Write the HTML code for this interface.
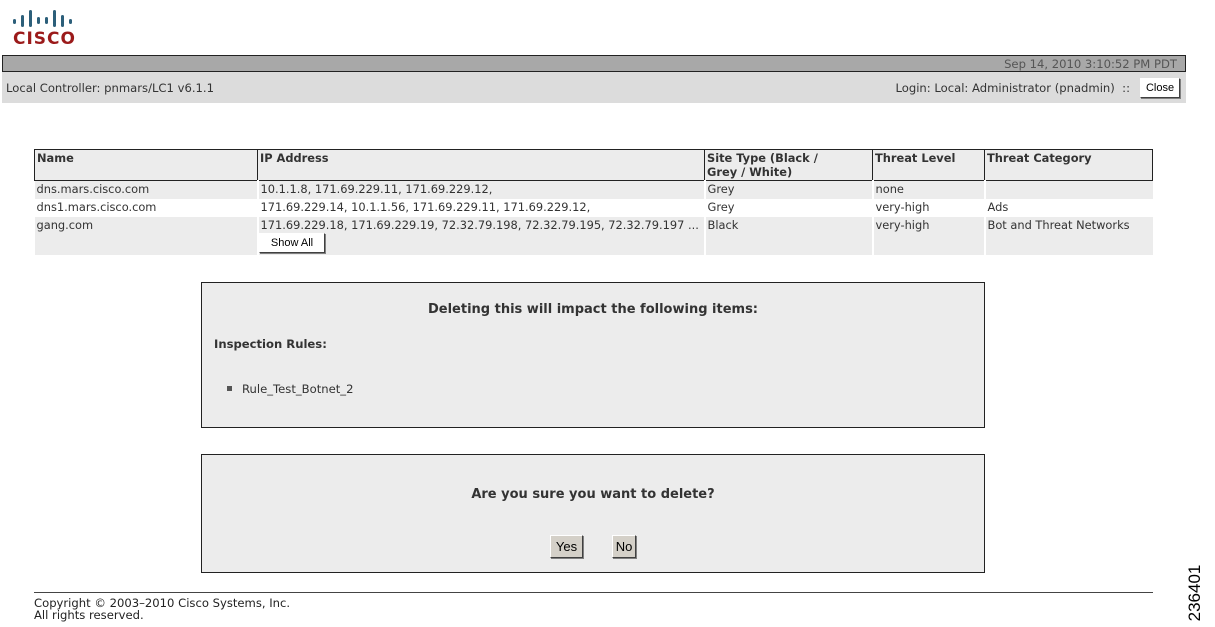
<!DOCTYPE html>
<html><head><style>
*{margin:0;padding:0;box-sizing:border-box}
body{width:1215px;height:627px;background:#fff;position:relative;font-family:"DejaVu Sans","Liberation Sans",sans-serif;font-size:11.6px;color:#333;overflow:hidden}
.a{position:absolute}
.btn{position:absolute;background:#d4d0c8;border:1px solid;border-color:#fff #404040 #404040 #fff;font-family:"Liberation Sans",sans-serif;font-size:12px;color:#000;text-align:center;box-shadow:1px 1px 0 #808080}
table{position:absolute;left:34px;top:149px;width:1119px;border-collapse:collapse;font-size:11.4px}
td,th{text-align:left;vertical-align:top;padding:1px 2px;font-weight:normal}
th{font-weight:bold;border:1px solid #222;background:#ececec;height:31px}
.g td{background:#ececec}
td+td{border-left:2px solid #fff}
</style></head><body>
<div class="a" style="left:13px;top:8px">
<svg width="66" height="22" viewBox="0 0 66 22">
<g fill="#2c5f7a">
<rect x="0" y="11" width="3" height="5" rx="1.5"/><rect x="8" y="7" width="3" height="12" rx="1.5"/><rect x="16" y="2" width="3" height="17" rx="1.5"/><rect x="24" y="9" width="3" height="7" rx="1.5"/><rect x="32" y="9" width="3" height="7" rx="1.5"/><rect x="40" y="2" width="3" height="17" rx="1.5"/><rect x="48" y="7" width="3" height="12" rx="1.5"/><rect x="56" y="11" width="3" height="5" rx="1.5"/>
</g></svg>
</div>
<div class="a" style="left:13px;top:29px;font-family:'DejaVu Sans',sans-serif;font-weight:bold;font-size:17px;color:#9b1a1a;letter-spacing:1px">CISCO</div>
<div class="a" style="left:2px;top:55px;width:1184px;height:17px;background:#a8a8a8;border:1px solid #222"></div>
<div class="a" style="right:38px;top:57px;color:#555">Sep 14, 2010 3:10:52 PM PDT</div>
<div class="a" style="left:2px;top:72px;width:1184px;height:31px;background:#dcdcdc"></div>
<div class="a" style="left:6px;top:81px">Local Controller: pnmars/LC1 v6.1.1</div>
<div class="a" style="right:85px;top:81px">Login: Local: Administrator (pnadmin) &nbsp;::</div>
<div class="btn" style="left:1140px;top:78px;width:40px;height:20px;line-height:18px;background:#fff;font-size:11px">Close</div>
<table>
<tr><th style="width:223px">Name</th><th style="width:447px">IP Address</th><th style="width:168px">Site Type (Black /<br>Grey / White)</th><th style="width:112px">Threat Level</th><th>Threat Category</th></tr>
<tr class="g" style="height:18px"><td>dns.mars.cisco.com</td><td>10.1.1.8, 171.69.229.11, 171.69.229.12,</td><td>Grey</td><td>none</td><td></td></tr>
<tr style="height:18px"><td>dns1.mars.cisco.com</td><td>171.69.229.14, 10.1.1.56, 171.69.229.11, 171.69.229.12,</td><td>Grey</td><td>very-high</td><td>Ads</td></tr>
<tr class="g" style="height:38px"><td>gang.com</td><td style="white-space:nowrap">171.69.229.18, 171.69.229.19, 72.32.79.198, 72.32.79.195, 72.32.79.197 ...</td><td>Black</td><td>very-high</td><td>Bot and Threat Networks</td></tr>
</table>
<div class="btn" style="left:259px;top:233px;width:66px;height:20px;line-height:18px;background:#fff;font-size:11px">Show All</div>
<div class="a" style="left:201px;top:282px;width:784px;height:146px;background:#ececec;border:1px solid #222"></div>
<div class="a" style="left:201px;top:302px;width:784px;text-align:center;font-weight:bold;font-size:13px">Deleting this will impact the following items:</div>
<div class="a" style="left:214px;top:337px;font-weight:bold">Inspection Rules:</div>
<div class="a" style="left:227px;top:386px;width:5px;height:5px;background:#555"></div>
<div class="a" style="left:242px;top:382px">Rule_Test_Botnet_2</div>
<div class="a" style="left:201px;top:454px;width:784px;height:119px;background:#ececec;border:1px solid #222"></div>
<div class="a" style="left:201px;top:487px;width:784px;text-align:center;font-weight:bold;font-size:13px">Are you sure you want to delete?</div>
<div class="btn" style="left:550px;top:535px;width:33px;height:23px;line-height:21px;font-size:13px">Yes</div>
<div class="btn" style="left:612px;top:535px;width:24px;height:23px;line-height:21px;font-size:13px">No</div>
<div class="a" style="left:34px;top:592px;width:1119px;height:1px;background:#444"></div>
<div class="a" style="left:34px;top:597px;color:#222;line-height:12px">Copyright © 2003–2010 Cisco Systems, Inc.<br>All rights reserved.</div>
<div class="a" style="left:1163px;top:583px;transform:rotate(-90deg);transform-origin:center;width:64px;text-align:center;font-family:'Liberation Sans',sans-serif;font-size:17px;color:#000">236401</div>
</body></html>
